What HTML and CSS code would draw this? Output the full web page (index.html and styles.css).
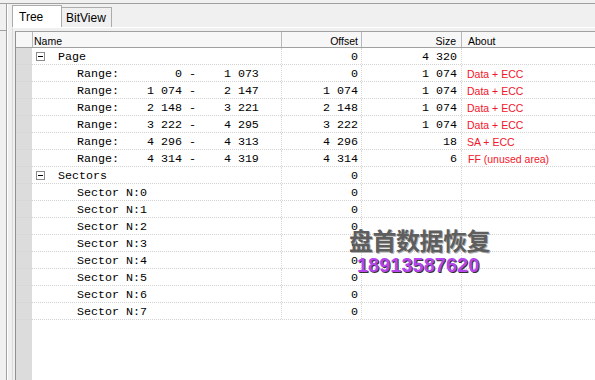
FILE: index.html
```html
<!DOCTYPE html>
<html lang="en">

<head>
    <meta charset="UTF-8">
    <meta name="viewport" content="width=device-width, initial-scale=1.0">
    <title>Tree</title>
    <link rel="stylesheet" href="styles.css">
</head>

<body>
    <div class="topbar"></div>
    <div class="main">
        <div class="side">
            <div class="side-tick"></div>
        </div>
        <div class="tabctl">
            <div class="tabstrip">
                <div class="tab tab-active">Tree</div>
                <div class="tab">BitView</div>
            </div>
            <div class="panel">
                <div class="list">
                    <div class="row head">
                        <div class="cell rh"></div>
                        <div class="cell name">Name</div>
                        <div class="cell num">Offset</div>
                        <div class="cell num size">Size</div>
                        <div class="cell about">About</div>
                    </div>

                    <div class="row">
                        <div class="cell rh"></div>
                        <div class="cell name mono"><span class="exp"></span><span class="group">Page</span></div>
                        <div class="cell num mono">0</div>
                        <div class="cell num size mono">4 320</div>
                        <div class="cell about"></div>
                    </div>
                    <div class="row">
                        <div class="cell rh"></div>
                        <div class="cell name mono child">Range:        0 -    1 073</div>
                        <div class="cell num mono">0</div>
                        <div class="cell num size mono">1 074</div>
                        <div class="cell about">Data + ECC</div>
                    </div>
                    <div class="row">
                        <div class="cell rh"></div>
                        <div class="cell name mono child">Range:    1 074 -    2 147</div>
                        <div class="cell num mono">1 074</div>
                        <div class="cell num size mono">1 074</div>
                        <div class="cell about">Data + ECC</div>
                    </div>
                    <div class="row">
                        <div class="cell rh"></div>
                        <div class="cell name mono child">Range:    2 148 -    3 221</div>
                        <div class="cell num mono">2 148</div>
                        <div class="cell num size mono">1 074</div>
                        <div class="cell about">Data + ECC</div>
                    </div>
                    <div class="row">
                        <div class="cell rh"></div>
                        <div class="cell name mono child">Range:    3 222 -    4 295</div>
                        <div class="cell num mono">3 222</div>
                        <div class="cell num size mono">1 074</div>
                        <div class="cell about">Data + ECC</div>
                    </div>
                    <div class="row">
                        <div class="cell rh"></div>
                        <div class="cell name mono child">Range:    4 296 -    4 313</div>
                        <div class="cell num mono">4 296</div>
                        <div class="cell num size mono">18</div>
                        <div class="cell about">SA + ECC</div>
                    </div>
                    <div class="row">
                        <div class="cell rh"></div>
                        <div class="cell name mono child">Range:    4 314 -    4 319</div>
                        <div class="cell num mono">4 314</div>
                        <div class="cell num size mono">6</div>
                        <div class="cell about about-ff">FF (unused area)</div>
                    </div>

                    <div class="row">
                        <div class="cell rh"></div>
                        <div class="cell name mono"><span class="exp"></span><span class="group">Sectors</span></div>
                        <div class="cell num mono">0</div>
                        <div class="cell num size mono"></div>
                        <div class="cell about"></div>
                    </div>
                    <div class="row">
                        <div class="cell rh"></div>
                        <div class="cell name mono child">Sector N:0</div>
                        <div class="cell num mono">0</div>
                        <div class="cell num size mono"></div>
                        <div class="cell about"></div>
                    </div>
                    <div class="row">
                        <div class="cell rh"></div>
                        <div class="cell name mono child">Sector N:1</div>
                        <div class="cell num mono">0</div>
                        <div class="cell num size mono"></div>
                        <div class="cell about"></div>
                    </div>
                    <div class="row">
                        <div class="cell rh"></div>
                        <div class="cell name mono child">Sector N:2</div>
                        <div class="cell num mono">0</div>
                        <div class="cell num size mono"></div>
                        <div class="cell about"></div>
                    </div>
                    <div class="row">
                        <div class="cell rh"></div>
                        <div class="cell name mono child">Sector N:3</div>
                        <div class="cell num mono">0</div>
                        <div class="cell num size mono"></div>
                        <div class="cell about"></div>
                    </div>
                    <div class="row">
                        <div class="cell rh"></div>
                        <div class="cell name mono child">Sector N:4</div>
                        <div class="cell num mono">0</div>
                        <div class="cell num size mono"></div>
                        <div class="cell about"></div>
                    </div>
                    <div class="row">
                        <div class="cell rh"></div>
                        <div class="cell name mono child">Sector N:5</div>
                        <div class="cell num mono">0</div>
                        <div class="cell num size mono"></div>
                        <div class="cell about"></div>
                    </div>
                    <div class="row">
                        <div class="cell rh"></div>
                        <div class="cell name mono child">Sector N:6</div>
                        <div class="cell num mono">0</div>
                        <div class="cell num size mono"></div>
                        <div class="cell about"></div>
                    </div>
                    <div class="row">
                        <div class="cell rh"></div>
                        <div class="cell name mono child">Sector N:7</div>
                        <div class="cell num mono">0</div>
                        <div class="cell num size mono"></div>
                        <div class="cell about"></div>
                    </div>
                </div>
            </div>
        </div>
    </div>

    <div class="watermark">
        <div class="wm-name">盘首数据恢复</div>
        <div class="wm-phone">18913587620</div>
    </div>
</body>

</html>
```

FILE: styles.css
```css
body {
    margin: 0;
    width: 595px;
    height: 380px;
    overflow: hidden;
    background-color: #f0f0f0;
    font-family: "Liberation Sans", Arial, sans-serif;
    position: relative;
}

.topbar {
    height: 3px;
    border-bottom: 1px solid #a0a0a0;
}

.main {
    display: flex;
    height: 376px;
}

.side {
    width: 6px;
    border-right: 1px solid #a0a0a0;
}

.side-tick {
    margin-top: 26px;
    height: 1px;
    background-color: #a0a0a0;
}

.tabctl {
    flex: 1;
    display: flex;
    flex-direction: column;
    padding-left: 4px;
    border-left: 1px solid #ffffff;
}

.tabstrip {
    height: 23px;
    display: flex;
    align-items: flex-end;
}

.tab {
    box-sizing: border-box;
    width: 50px;
    height: 20px;
    border: 1px solid #acacac;
    border-bottom: none;
    background-color: #f0f0f0;
    font-size: 12px;
    line-height: 20px;
    padding-left: 4px;
    color: #000;
}

.tab + .tab {
    border-left: none;
    width: 50px;
}

.tab-active {
    height: 22px;
    background-color: #ffffff;
    padding-left: 6px;
    line-height: 22px;
}

.panel {
    flex: 1;
    display: flex;
    border-top: 1px solid #ffffff;
    border-left: 1px solid #d9d9d9;
    padding: 3px 0 0 2px;
}

.list {
    flex: 1;
    border-top: 1px solid #a0a0a0;
    border-left: 1px solid #8e8f8f;
    background: linear-gradient(to right, #dcdcdc 16px, #ffffff 16px);
}

.row {
    display: grid;
    grid-template-columns: 17px 249px 80px 100px 1fr;
    height: 17px;
    box-sizing: border-box;
    border-bottom: 1px dotted #d2d2d2;
}

.cell {
    height: 16px;
    line-height: 18px;
    white-space: pre;
    overflow: hidden;
}

.rh {
    border-right: 1px solid transparent;
}

.name,
.num {
    border-right: 1px dotted #d8d8d8;
}

.mono {
    font-family: "Liberation Mono", "Courier New", monospace;
    font-size: 11.67px;
    color: #000;
}

.num {
    text-align: right;
    padding-right: 3px;
}

.size {
    padding-right: 4px;
}

.about {
    padding-left: 5px;
    font-size: 10.5px;
    color: #f2152b;
}

.about-ff {
    padding-left: 6px;
}

.child {
    padding-left: 44px;
}

.exp {
    display: inline-block;
    box-sizing: border-box;
    width: 9px;
    height: 9px;
    margin-left: 3px;
    border: 1px solid #8c8c8c;
    background-color: #fff;
    vertical-align: -1px;
    position: relative;
}

.exp::after {
    content: "";
    position: absolute;
    left: 1px;
    top: 3px;
    width: 5px;
    height: 1px;
    background-color: #000;
}

.group {
    margin-left: 13px;
}

.head {
    height: 16px;
    border-bottom: 1px solid #a0a0a0;
    background-color: #f7f7f7;
}

.head .cell {
    height: 15px;
    line-height: 18px;
    font-size: 10.5px;
    color: #000;
}

.head .rh {
    border-right: 1px solid #b9b9b9;
}

.head .name,
.head .num {
    border-right: 1px solid #b9b9b9;
}

.head .name {
    padding-left: 1px;
}

.head .size {
    padding-right: 5px;
}

.head .about {
    padding-left: 6px;
}

.watermark {
    position: absolute;
    left: 349px;
    top: 226px;
}

.wm-name {
    font-family: "Noto Sans CJK SC", sans-serif;
    font-weight: bold;
    font-size: 24px;
    line-height: 28px;
    letter-spacing: -0.5px;
    color: #5e5e5e;
    text-shadow: 1px 1px 0 #b0b0b0;
}

.wm-phone {
    margin-left: 8px;
    font-family: "Liberation Sans", Arial, sans-serif;
    font-weight: bold;
    font-size: 20px;
    line-height: 22px;
    color: #b446ec;
    text-shadow: 1px 1px 0 #333;
}
```
